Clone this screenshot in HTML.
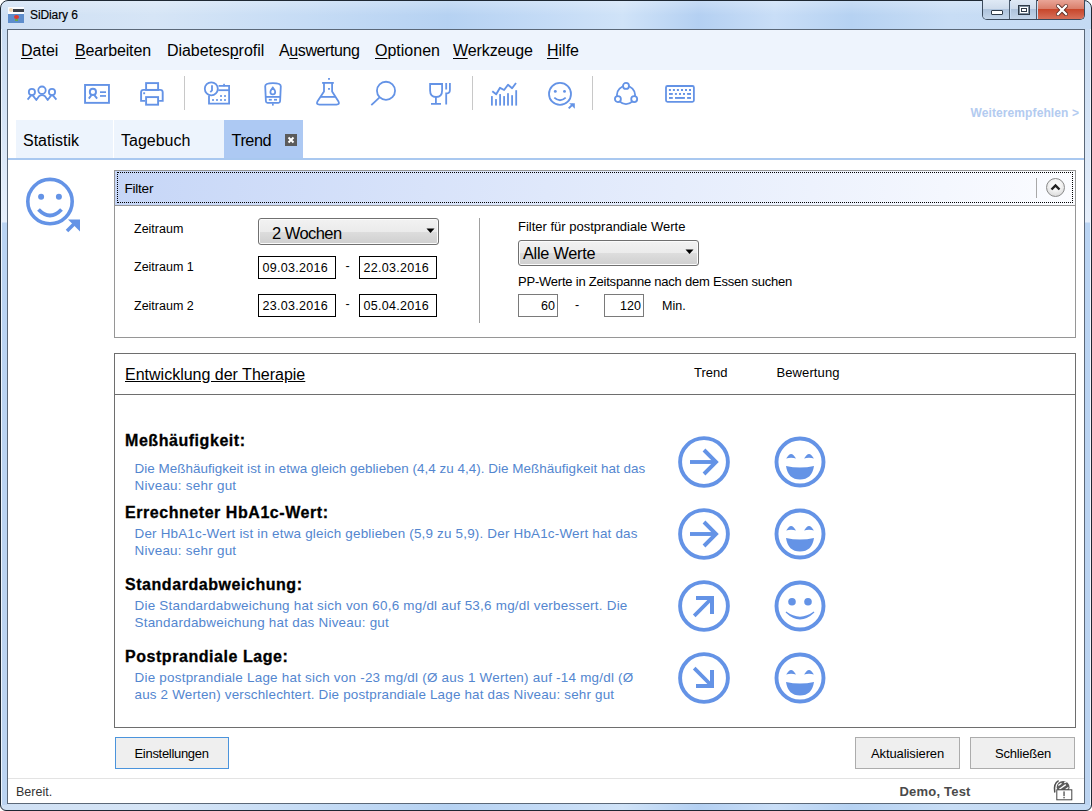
<!DOCTYPE html>
<html><head><meta charset="utf-8">
<style>
*{margin:0;padding:0;box-sizing:border-box}
html,body{width:1092px;height:811px;overflow:hidden;background:#fff;font-family:"Liberation Sans",sans-serif}
.a{position:absolute}
.t{position:absolute;white-space:pre}
u{text-decoration:underline;text-underline-offset:2px}
</style></head><body>
<div class="a" style="left:0;top:0;width:1092px;height:811px;background:linear-gradient(90deg,#cfe0f4 0%,#d6e5f6 14%,#c6dcf5 28%,#b6d2f2 41%,#c4dbf6 50%,#d0e3f8 57%,#b4d0f2 64%,#c9def7 71%,#b6d2f2 78%,#c8ddf5 87%,#c4daf3 100%);border:1px solid #1e2833;border-radius:8px 8px 6px 6px"></div>
<div class="a" style="left:1px;top:29px;width:6px;height:776px;background:linear-gradient(180deg,#c9dcf3 0px,#d5e4f6 90px,#e6effb 193px,#bad4f3 194px,#bcd4f1 776px);border-left:1px solid #eef5fd"></div>
<div class="a" style="left:1085px;top:29px;width:6px;height:776px;background:linear-gradient(180deg,#c9dcf3 0px,#d5e4f6 90px,#e6effb 193px,#bad4f3 194px,#bcd4f1 776px);border-right:1px solid #eef5fd"></div>
<div class="a" style="left:1px;top:1px;width:1090px;height:14px;background:linear-gradient(180deg,rgba(255,255,255,.25),rgba(255,255,255,0));border-radius:7px 7px 0 0"></div>
<div class="a" style="left:7px;top:29px;width:1078px;height:775px;background:#fff;border:1px solid #5b6878"></div>
<div class="a" style="left:8px;top:7px;width:16px;height:7px;background:#fafcff"></div>
<div class="a" style="left:8px;top:14px;width:16px;height:9px;background:#5d8dcc"></div>
<div class="a" style="left:9px;top:8px;width:4px;height:4px;border-radius:50%;background:#f0d8b8"></div>
<div class="a" style="left:13px;top:9px;width:11px;height:3px;background:#3a3f48"></div>
<div class="a" style="left:14px;top:15px;width:5px;height:4px;border-radius:50%;background:#e03a2a"></div>
<div class="a" style="left:15px;top:19px;width:3px;height:2px;background:#6aa84a"></div>
<div class="t" style="left:30px;top:9.44px;font-size:12px;line-height:12px;font-weight:400;color:#000;letter-spacing:-0.1px;-webkit-text-stroke:0.15px #000">SiDiary 6</div>
<div class="a" style="left:982px;top:0;width:103px;height:20px;border:1px solid #3b4a5c;border-top:none;border-radius:0 0 5px 5px;overflow:hidden"><div class="a" style="left:0;top:0;width:27px;height:19px;background:linear-gradient(180deg,#dfe9f5 0%,#cfdcec 45%,#aec3dc 50%,#c4d6ea 100%);border-right:1px solid #4a5a6c"></div><div class="a" style="left:28px;top:0;width:26px;height:19px;background:linear-gradient(180deg,#dfe9f5 0%,#cfdcec 45%,#aec3dc 50%,#c4d6ea 100%);border-right:1px solid #4a5a6c"></div><div class="a" style="left:55px;top:0;width:48px;height:19px;background:linear-gradient(180deg,#e9a597 0%,#da7f6c 45%,#c8472c 50%,#d7705a 100%)"></div></div>
<div class="a" style="left:991px;top:10px;width:12px;height:5px;border:1px solid #2f3b48;background:#fff;border-radius:1px"></div>
<div class="a" style="left:1018px;top:5px;width:12px;height:10px;border:1px solid #2f3b48;background:#fff;box-shadow:inset 0 0 0 1px #8090a0"></div>
<div class="a" style="left:1021px;top:8px;width:6px;height:4px;border:1px solid #2f3b48;background:#fff"></div>
<svg class="a" style="left:1056px;top:4px" width="12" height="12" viewBox="0 0 12 12"><path d="M2 2 L10 10 M10 2 L2 10" stroke="#5a2a22" stroke-width="4" stroke-linecap="square"/><path d="M2 2 L10 10 M10 2 L2 10" stroke="#fff" stroke-width="2.3" stroke-linecap="square"/></svg>
<div class="a" style="left:8px;top:30px;width:1076px;height:40px;background:#eef4fd"></div>
<div class="t" style="left:21px;top:42.86px;font-size:16px;line-height:16px;font-weight:400;color:#000;letter-spacing:0px;"><u>D</u>atei</div>
<div class="t" style="left:75px;top:42.86px;font-size:16px;line-height:16px;font-weight:400;color:#000;letter-spacing:-0.15px;"><u>B</u>earbeiten</div>
<div class="t" style="left:167px;top:42.86px;font-size:16px;line-height:16px;font-weight:400;color:#000;letter-spacing:-0.05px;">Diabetes<u>p</u>rofil</div>
<div class="t" style="left:279px;top:42.86px;font-size:16px;line-height:16px;font-weight:400;color:#000;letter-spacing:-0.4px;">A<u>u</u>swertung</div>
<div class="t" style="left:375px;top:42.86px;font-size:16px;line-height:16px;font-weight:400;color:#000;letter-spacing:0px;"><u>O</u>ptionen</div>
<div class="t" style="left:453px;top:42.86px;font-size:16px;line-height:16px;font-weight:400;color:#000;letter-spacing:-0.1px;"><u>W</u>erkzeuge</div>
<div class="t" style="left:547px;top:42.86px;font-size:16px;line-height:16px;font-weight:400;color:#000;letter-spacing:0px;"><u>H</u>ilfe</div>
<div class="a" style="left:8px;top:70px;width:1076px;height:50px;background:#fff"></div>
<div class="a" style="left:184px;top:76px;width:1px;height:34px;background:#c8c8c8"></div>
<div class="a" style="left:472px;top:76px;width:1px;height:34px;background:#c8c8c8"></div>
<div class="a" style="left:592px;top:76px;width:1px;height:34px;background:#c8c8c8"></div>
<div class="t" style="left:970.5px;top:106.94px;font-size:12px;line-height:12px;font-weight:700;color:#b3cbf0;letter-spacing:0.1px;">Weiterempfehlen &gt;</div>
<svg class="a" style="left:24px;top:80px" width="36" height="24" viewBox="0 0 36 24"><g fill="none" stroke="#6493e6" stroke-width="1.8"><circle cx="7.9" cy="12" r="3.1"/><circle cx="18" cy="10.2" r="3.7"/><circle cx="28" cy="12" r="3.1"/><path d="M3.6 19.6 L6.6 15.9 Q7.9 15 9.2 15.9 L12.3 20 L15 16.2 Q18 14.2 21 16.2 L23.7 20 L26.8 15.9 Q28 15 29.3 15.9 L32.4 19.6" stroke-linejoin="round"/></g></svg>
<svg class="a" style="left:83px;top:83px" width="28" height="22" viewBox="0 0 28 22"><g fill="none" stroke="#6493e6" stroke-width="1.9"><rect x="2.05" y="1.95" width="23.9" height="17.9"/><circle cx="9.9" cy="8.9" r="3.1"/><path d="M5.8 15.6 L8.4 12.1 M11.4 12.1 L14.1 15.6"/></g><g fill="#6493e6"><rect x="17" y="8.3" width="6" height="1.7"/><rect x="17" y="12.1" width="6" height="1.7"/></g></svg>
<svg class="a" style="left:139px;top:81px" width="27" height="26" viewBox="0 0 27 26"><g fill="none" stroke="#6493e6" stroke-width="1.9"><rect x="7.1" y="2.1" width="12" height="6.8"/><path d="M6.1 19.9 H2.1 V11.3 Q2.1 8.9 4.6 8.9 H21.2 Q23.7 8.9 23.7 11.3 V19.9 H20.1"/><rect x="7.1" y="16.1" width="12" height="7.6"/></g><rect x="4.2" y="11.3" width="1.9" height="1.9" fill="#6493e6"/></svg>
<svg class="a" style="left:203px;top:80px" width="29" height="27" viewBox="0 0 29 27"><g fill="none" stroke="#6493e6" stroke-width="1.8"><circle cx="8.3" cy="8.8" r="6.5"/><path d="M9 5.3 V10.4 L7.3 12.1"/><path d="M15.6 5.8 H26.1 V23.6 H6 V15.8"/><path d="M15.2 10.2 H26"/></g><g fill="#6493e6"><rect x="20.2" y="3.8" width="1.7" height="2.5"/><rect x="17.1" y="15.1" width="1.8" height="1.8"/><rect x="21.1" y="15.1" width="1.8" height="1.8"/><rect x="9.1" y="19.1" width="1.8" height="1.8"/><rect x="13.1" y="19.1" width="1.8" height="1.8"/><rect x="17.1" y="19.1" width="1.8" height="1.8"/><rect x="21.1" y="19.1" width="1.8" height="1.8"/></g></svg>
<svg class="a" style="left:263px;top:81px" width="21" height="27" viewBox="0 0 21 27"><g fill="none" stroke="#6493e6" stroke-width="1.8"><path d="M2.2 5.2 Q2.2 2.2 9.9 2.2 Q17.8 2.2 17.8 5.2 L17.1 20.2 Q17 21.8 15.4 21.8 H4.6 Q3 21.8 2.9 20.2 Z"/><path d="M2.8 15.9 H17.3"/><path d="M9.8 6.6 Q7.4 9.5 7.4 10.9 A2.4 2.4 0 0 0 12.2 10.9 Q12.2 9.5 9.8 6.6Z"/></g><g fill="#6493e6"><rect x="5.8" y="17.9" width="3" height="1.7"/><rect x="11" y="17.9" width="3" height="1.7"/><rect x="9" y="22.4" width="1.7" height="2.2"/></g></svg>
<svg class="a" style="left:315px;top:77px" width="27" height="30" viewBox="0 0 27 30"><g fill="none" stroke="#6493e6" stroke-width="1.8"><path d="M7.1 5.9 H18.8"/><path d="M9 6 V14.6 L2.4 24.6 Q0.9 27.6 4.4 27.6 H21.5 Q25 27.6 23.5 24.6 L17.1 14.6 V6" stroke-linejoin="round"/><path d="M5.3 19.9 H20.5"/></g><g fill="#6493e6"><rect x="13.1" y="1" width="1.8" height="1.8"/><rect x="13.1" y="11" width="1.8" height="1.8"/></g></svg>
<svg class="a" style="left:369px;top:80px" width="29" height="28" viewBox="0 0 29 28"><g fill="none" stroke="#6493e6" stroke-width="1.8"><circle cx="17" cy="10.8" r="9.05"/><path d="M2.3 25.2 L10.3 17.6"/></g></svg>
<svg class="a" style="left:427px;top:81px" width="26" height="25" viewBox="0 0 26 25"><g fill="none" stroke="#6493e6" stroke-width="1.8"><path d="M3.1 3 H15.1 V9.5 Q15.1 16 9.1 16 Q3.1 16 3.1 9.5Z"/><path d="M8.9 16 V22.8 M4 22.8 H14"/><path d="M19.2 2 V8.5 M22.9 2 V9 Q22.9 12.5 19.2 12.5 V23.6"/></g></svg>
<svg class="a" style="left:489px;top:81px" width="30" height="26" viewBox="0 0 30 26"><path d="M3.3 10.3 L7.2 13.3 L11 6.8 L15.1 9 L19 3.8 L23.1 7.2 L27 2" fill="none" stroke="#6493e6" stroke-width="1.9" stroke-linejoin="round"/><g fill="#6493e6"><rect x="2.0" y="15.1" width="1.8" height="9.5"/><rect x="6.1" y="18.1" width="1.8" height="6.5"/><rect x="10.2" y="13.1" width="1.8" height="11.5"/><rect x="14.2" y="15.1" width="1.8" height="9.5"/><rect x="18.1" y="12.2" width="1.8" height="12.4"/><rect x="22.2" y="14.2" width="1.8" height="10.4"/><rect x="26.3" y="9.2" width="1.8" height="15.4"/></g></svg>
<svg class="a" style="left:547px;top:81px" width="30" height="30" viewBox="0 0 30 30"><g fill="none" stroke="#6493e6" stroke-width="1.8"><circle cx="13" cy="12.9" r="11"/><path d="M7.3 16.6 Q13 21.8 18.7 16.6"/></g><circle cx="8.3" cy="10.4" r="1.45" fill="#6493e6"/><circle cx="17.5" cy="10.4" r="1.45" fill="#6493e6"/><path d="M21.7 27.4 L26 23.1" stroke="#6493e6" stroke-width="2"/><path d="M22.2 22.2 H27.8 V27.8Z" fill="#6493e6"/></svg>
<svg class="a" style="left:613px;top:81px" width="26" height="25" viewBox="0 0 26 25"><g fill="none" stroke="#6493e6" stroke-width="1.8"><circle cx="13" cy="14" r="9.1"/></g><g fill="#fff" stroke="#6493e6" stroke-width="1.8"><circle cx="13" cy="4.9" r="3"/><circle cx="4.9" cy="18.1" r="3"/><circle cx="21.2" cy="18.1" r="3"/></g></svg>
<svg class="a" style="left:664px;top:84px" width="32" height="20" viewBox="0 0 32 20"><rect x="2" y="2" width="27.9" height="15.8" rx="1.5" fill="none" stroke="#6493e6" stroke-width="1.8"/><g fill="#6493e6"><rect x="4.9" y="5" width="2" height="2"/><rect x="8.9" y="5" width="2" height="2"/><rect x="12.9" y="5" width="2" height="2"/><rect x="17.0" y="5" width="2" height="2"/><rect x="21.0" y="5" width="2" height="2"/><rect x="25.0" y="5" width="2" height="2"/><rect x="5" y="9" width="3.8" height="1.9"/><rect x="10.9" y="9" width="2" height="1.9"/><rect x="15.0" y="9" width="2" height="1.9"/><rect x="19.0" y="9" width="2" height="1.9"/><rect x="23.1" y="9" width="3.9" height="1.9"/><rect x="5" y="13" width="3.8" height="1.9"/><rect x="11" y="13" width="9.9" height="1.9"/><rect x="23.1" y="13" width="3.9" height="1.9"/></g></svg>
<div class="a" style="left:16px;top:120px;width:97px;height:38px;background:#edf4fd"></div>
<div class="a" style="left:114px;top:120px;width:110px;height:38px;background:#edf4fd"></div>
<div class="a" style="left:224px;top:120px;width:79px;height:38px;background:#adc9f3"></div>
<div class="t" style="left:23px;top:132.96px;font-size:16px;line-height:16px;font-weight:400;color:#000;letter-spacing:0px;">Statistik</div>
<div class="t" style="left:121px;top:132.96px;font-size:16px;line-height:16px;font-weight:400;color:#000;letter-spacing:0px;">Tagebuch</div>
<div class="t" style="left:231.5px;top:132.10px;font-size:16.3px;line-height:16.3px;font-weight:400;color:#000;letter-spacing:-0.45px;">Trend</div>
<div class="a" style="left:285px;top:134px;width:12px;height:12px;background:#5b5b5b"></div>
<svg class="a" style="left:285px;top:134px" width="12" height="12" viewBox="0 0 12 12"><path d="M3.5 3.5L8.5 8.5M8.5 3.5L3.5 8.5" stroke="#fff" stroke-width="2"/></svg>
<div class="a" style="left:8px;top:158px;width:1076px;height:2px;background:#a9c8f0"></div>
<svg class="a" style="left:22px;top:174px" width="64" height="62" viewBox="0 0 64 62"><circle cx="28" cy="27.6" r="22.2" fill="none" stroke="#6493e6" stroke-width="3.6"/><circle cx="19.1" cy="22.8" r="3" fill="#6493e6"/><circle cx="36.9" cy="22.8" r="3" fill="#6493e6"/><path d="M16.5 35.5 Q28 47.5 39.5 35.5" fill="none" stroke="#6493e6" stroke-width="3.8"/><path d="M45 57 L54 48" stroke="#6493e6" stroke-width="3.6"/><path d="M46 45.5 H58 V57.5Z" fill="#6493e6"/></svg>
<div class="a" style="left:114px;top:170px;width:962px;height:168px;border:1px solid #969696;background:#fff"></div>
<div class="a" style="left:115px;top:171px;width:960px;height:34px;background:linear-gradient(90deg,#c6d6f7 0%,#dfe8fb 45%,#fbfcff 100%)"></div>
<div class="a" style="left:114px;top:205px;width:962px;height:1px;background:#969696"></div>
<div class="a" style="left:117px;top:172px;width:956px;height:31px;border:1px dotted #000"></div>
<div class="t" style="left:124.5px;top:181.99px;font-size:13.6px;line-height:13.6px;font-weight:400;color:#000;letter-spacing:-0.25px;">Filter</div>
<div class="a" style="left:1036px;top:178px;width:1px;height:20px;background:#a8a8a8"></div>
<div class="a" style="left:1046px;top:178px;width:19px;height:19px;border-radius:50%;border:1px solid #8a8a8a;background:radial-gradient(circle at 50% 35%,#fff 0%,#f4f4f4 40%,#cfcfcf 100%)"></div>
<svg class="a" style="left:1049px;top:182px" width="13" height="10" viewBox="0 0 13 10"><path d="M2.5 7.5 L6.5 3.5 L10.5 7.5" fill="none" stroke="#222" stroke-width="2.4"/></svg>
<div class="t" style="left:134px;top:223.32px;font-size:12.5px;line-height:12.5px;font-weight:400;color:#000;letter-spacing:0px;">Zeitraum</div>
<div class="t" style="left:134px;top:261.32px;font-size:12.5px;line-height:12.5px;font-weight:400;color:#000;letter-spacing:0px;">Zeitraum 1</div>
<div class="t" style="left:134px;top:299.82px;font-size:12.5px;line-height:12.5px;font-weight:400;color:#000;letter-spacing:0px;">Zeitraum 2</div>
<div class="a" style="left:258px;top:218px;width:181px;height:27px;border:1px solid #707070;border-radius:3px;box-shadow:inset 0 0 0 1px #fbfbfb;background:linear-gradient(180deg,#f2f2f2 0%,#ebebeb 50%,#dddddd 51%,#cfcfcf 100%)"></div>
<div class="t" style="left:272px;top:224.53px;font-size:16.5px;line-height:16.5px;font-weight:400;color:#000;letter-spacing:-0.55px;">2 Wochen</div>
<svg class="a" style="left:426px;top:228px" width="10" height="6" viewBox="0 0 10 6"><path d="M0.5 0.5h8l-4 4.5z" fill="#000"/></svg>
<div class="a" style="left:258px;top:256px;width:78px;height:23px;border:1px solid #000;background:#fff"></div>
<div class="t" style="left:262.5px;top:261.82px;font-size:12.5px;line-height:12.5px;font-weight:400;color:#000;letter-spacing:0.3px;">09.03.2016</div>
<div class="a" style="left:359px;top:256px;width:78px;height:23px;border:1px solid #000;background:#fff"></div>
<div class="t" style="left:363.5px;top:261.82px;font-size:12.5px;line-height:12.5px;font-weight:400;color:#000;letter-spacing:0.3px;">22.03.2016</div>
<div class="a" style="left:258px;top:294px;width:78px;height:23px;border:1px solid #000;background:#fff"></div>
<div class="t" style="left:262.5px;top:299.82px;font-size:12.5px;line-height:12.5px;font-weight:400;color:#000;letter-spacing:0.3px;">23.03.2016</div>
<div class="a" style="left:359px;top:294px;width:78px;height:23px;border:1px solid #000;background:#fff"></div>
<div class="t" style="left:363.5px;top:299.82px;font-size:12.5px;line-height:12.5px;font-weight:400;color:#000;letter-spacing:0.3px;">05.04.2016</div>
<div class="t" style="left:345.5px;top:260.32px;font-size:12.5px;line-height:12.5px;font-weight:400;color:#000;letter-spacing:0px;">-</div>
<div class="t" style="left:345.5px;top:298.32px;font-size:12.5px;line-height:12.5px;font-weight:400;color:#000;letter-spacing:0px;">-</div>
<div class="a" style="left:479px;top:218px;width:1px;height:105px;background:#a0a0a0"></div>
<div class="t" style="left:518px;top:220.40px;font-size:13px;line-height:13px;font-weight:400;color:#000;letter-spacing:0px;">Filter für postprandiale Werte</div>
<div class="a" style="left:518px;top:240px;width:181px;height:26px;border:1px solid #707070;border-radius:3px;box-shadow:inset 0 0 0 1px #fbfbfb;background:linear-gradient(180deg,#f2f2f2 0%,#ebebeb 50%,#dddddd 51%,#cfcfcf 100%)"></div>
<div class="t" style="left:523px;top:245.40px;font-size:16.3px;line-height:16.3px;font-weight:400;color:#000;letter-spacing:-0.25px;">Alle Werte</div>
<svg class="a" style="left:685px;top:249px" width="10" height="6" viewBox="0 0 10 6"><path d="M0.5 0.5h8l-4 4.5z" fill="#000"/></svg>
<div class="t" style="left:518px;top:275.40px;font-size:13px;line-height:13px;font-weight:400;color:#000;letter-spacing:-0.22px;">PP-Werte in Zeitspanne nach dem Essen suchen</div>
<div class="a" style="left:518px;top:294px;width:40px;height:23px;border:1px solid #7a7a7a;background:#fff"></div>
<div class="a" style="left:604px;top:294px;width:40px;height:23px;border:1px solid #7a7a7a;background:#fff"></div>
<div class="t" style="left:541px;top:299.82px;font-size:12.5px;line-height:12.5px;font-weight:400;color:#000;letter-spacing:0px;">60</div>
<div class="t" style="left:620px;top:299.82px;font-size:12.5px;line-height:12.5px;font-weight:400;color:#000;letter-spacing:0px;">120</div>
<div class="t" style="left:575px;top:299.32px;font-size:12.5px;line-height:12.5px;font-weight:400;color:#000;letter-spacing:0px;">-</div>
<div class="t" style="left:662px;top:299.82px;font-size:12.5px;line-height:12.5px;font-weight:400;color:#000;letter-spacing:0px;">Min.</div>
<div class="a" style="left:114px;top:353px;width:962px;height:375px;border:1px solid #6e6e6e;background:#fff"></div>
<div class="a" style="left:114px;top:394px;width:962px;height:1px;background:#6e6e6e"></div>
<div class="t" style="left:125px;top:366.76px;font-size:16px;line-height:16px;font-weight:400;color:#000;letter-spacing:0px;text-decoration:underline;text-underline-offset:1px">Entwicklung der Therapie</div>
<div class="t" style="left:694px;top:366.40px;font-size:13px;line-height:13px;font-weight:400;color:#000;letter-spacing:0px;">Trend</div>
<div class="t" style="left:776.5px;top:366.40px;font-size:13px;line-height:13px;font-weight:400;color:#000;letter-spacing:0.1px;">Bewertung</div>
<div class="t" style="left:125px;top:433.06px;font-size:16px;line-height:16px;font-weight:700;color:#000;letter-spacing:0.55px;-webkit-text-stroke:0.3px #000">Meßhäufigkeit:</div>
<div class="t" style="left:125px;top:505.26px;font-size:16px;line-height:16px;font-weight:700;color:#000;letter-spacing:0.55px;-webkit-text-stroke:0.3px #000">Errechneter HbA1c-Wert:</div>
<div class="t" style="left:125px;top:577.26px;font-size:16px;line-height:16px;font-weight:700;color:#000;letter-spacing:0.55px;-webkit-text-stroke:0.3px #000">Standardabweichung:</div>
<div class="t" style="left:125px;top:648.86px;font-size:16px;line-height:16px;font-weight:700;color:#000;letter-spacing:0.55px;-webkit-text-stroke:0.3px #000">Postprandiale Lage:</div>
<div class="t" style="left:134.5px;top:462.01px;font-size:13.45px;line-height:13.45px;font-weight:400;color:#5386cf;letter-spacing:0.033px;">Die Meßhäufigkeit ist in etwa gleich geblieben (4,4 zu 4,4). Die Meßhäufigkeit hat das</div>
<div class="t" style="left:134.5px;top:478.71px;font-size:13.45px;line-height:13.45px;font-weight:400;color:#5386cf;letter-spacing:0.25px;">Niveau: sehr gut</div>
<div class="t" style="left:134.5px;top:527.01px;font-size:13.45px;line-height:13.45px;font-weight:400;color:#5386cf;letter-spacing:0.19px;">Der HbA1c-Wert ist in etwa gleich geblieben (5,9 zu 5,9). Der HbA1c-Wert hat das</div>
<div class="t" style="left:134.5px;top:543.61px;font-size:13.45px;line-height:13.45px;font-weight:400;color:#5386cf;letter-spacing:0.25px;">Niveau: sehr gut</div>
<div class="t" style="left:134.5px;top:598.91px;font-size:13.45px;line-height:13.45px;font-weight:400;color:#5386cf;letter-spacing:0.234px;">Die Standardabweichung hat sich von 60,6 mg/dl auf 53,6 mg/dl verbessert. Die</div>
<div class="t" style="left:134.5px;top:616.11px;font-size:13.45px;line-height:13.45px;font-weight:400;color:#5386cf;letter-spacing:0.23px;">Standardabweichung hat das Niveau: gut</div>
<div class="t" style="left:134.5px;top:670.81px;font-size:13.45px;line-height:13.45px;font-weight:400;color:#5386cf;letter-spacing:0.231px;">Die postprandiale Lage hat sich von -23 mg/dl (&Oslash; aus 1 Werten) auf -14 mg/dl (&Oslash;</div>
<div class="t" style="left:134.5px;top:688.11px;font-size:13.45px;line-height:13.45px;font-weight:400;color:#5386cf;letter-spacing:0.17px;">aus 2 Werten) verschlechtert. Die postprandiale Lage hat das Niveau: sehr gut</div>
<svg class="a" style="left:678px;top:436px" width="52" height="52" viewBox="0 0 52 52"><circle cx="26" cy="26" r="23.9" fill="none" stroke="#6493e6" stroke-width="3.9"/><path d="M12 26 H38" stroke="#6493e6" stroke-width="3.9"/><path d="M26 14 L38 26 L26 38" fill="none" stroke="#6493e6" stroke-width="3.9"/></svg>
<svg class="a" style="left:774px;top:436px" width="52" height="52" viewBox="0 0 52 52"><circle cx="26" cy="26" r="23.5" fill="none" stroke="#6493e6" stroke-width="3.9"/><path d="M12.2 22.6 Q17.1 13.2 22 22.6 Q17.1 20.8 12.2 22.6Z" fill="#6493e6"/><path d="M30.1 22.6 Q35 13.2 39.9 22.6 Q35 20.8 30.1 22.6Z" fill="#6493e6"/><path d="M12 30 Q26 33 40 30 Q38 43.5 26 43.5 Q14 43.5 12 30Z" fill="#6493e6"/></svg>
<svg class="a" style="left:678px;top:508px" width="52" height="52" viewBox="0 0 52 52"><circle cx="26" cy="26" r="23.9" fill="none" stroke="#6493e6" stroke-width="3.9"/><path d="M12 26 H38" stroke="#6493e6" stroke-width="3.9"/><path d="M26 14 L38 26 L26 38" fill="none" stroke="#6493e6" stroke-width="3.9"/></svg>
<svg class="a" style="left:774px;top:508px" width="52" height="52" viewBox="0 0 52 52"><circle cx="26" cy="26" r="23.5" fill="none" stroke="#6493e6" stroke-width="3.9"/><path d="M12.2 22.6 Q17.1 13.2 22 22.6 Q17.1 20.8 12.2 22.6Z" fill="#6493e6"/><path d="M30.1 22.6 Q35 13.2 39.9 22.6 Q35 20.8 30.1 22.6Z" fill="#6493e6"/><path d="M12 30 Q26 33 40 30 Q38 43.5 26 43.5 Q14 43.5 12 30Z" fill="#6493e6"/></svg>
<svg class="a" style="left:678px;top:580px" width="52" height="52" viewBox="0 0 52 52"><circle cx="26" cy="26" r="23.9" fill="none" stroke="#6493e6" stroke-width="3.9"/><path d="M16.2 35.8 L34 18" stroke="#6493e6" stroke-width="3.8"/><path d="M18 16 H36 V34 L32 34 V20 H18Z" fill="#6493e6"/></svg>
<svg class="a" style="left:774px;top:580px" width="52" height="52" viewBox="0 0 52 52"><circle cx="26" cy="26" r="23.5" fill="none" stroke="#6493e6" stroke-width="3.9"/><circle cx="18" cy="21.8" r="3.8" fill="#6493e6"/><circle cx="34" cy="21.8" r="3.8" fill="#6493e6"/><path d="M11.6 32.6 Q26 46.4 40.4 32.6 L39.8 31.6 Q26 41.8 12.2 31.6 Z" fill="#6493e6"/></svg>
<svg class="a" style="left:678px;top:652px" width="52" height="52" viewBox="0 0 52 52"><circle cx="26" cy="26" r="23.9" fill="none" stroke="#6493e6" stroke-width="3.9"/><path d="M16.2 16.2 L34 34" stroke="#6493e6" stroke-width="3.8"/><path d="M18 36 H36 V18 L32 18 V32 H18Z" fill="#6493e6"/></svg>
<svg class="a" style="left:774px;top:652px" width="52" height="52" viewBox="0 0 52 52"><circle cx="26" cy="26" r="23.5" fill="none" stroke="#6493e6" stroke-width="3.9"/><path d="M12.2 22.6 Q17.1 13.2 22 22.6 Q17.1 20.8 12.2 22.6Z" fill="#6493e6"/><path d="M30.1 22.6 Q35 13.2 39.9 22.6 Q35 20.8 30.1 22.6Z" fill="#6493e6"/><path d="M12 30 Q26 33 40 30 Q38 43.5 26 43.5 Q14 43.5 12 30Z" fill="#6493e6"/></svg>
<div class="a" style="left:115px;top:737px;width:114px;height:32px;background:#efefef;border:1px solid #4b94dc"></div>
<div class="t" style="left:134.5px;top:747.20px;font-size:13px;line-height:13px;font-weight:400;color:#000;letter-spacing:-0.3px;">Einstellungen</div>
<div class="a" style="left:855px;top:737px;width:105px;height:32px;background:#efefef;border:1px solid #acacac"></div>
<div class="t" style="left:871px;top:747.20px;font-size:13px;line-height:13px;font-weight:400;color:#000;letter-spacing:-0.1px;">Aktualisieren</div>
<div class="a" style="left:970px;top:737px;width:105px;height:32px;background:#efefef;border:1px solid #acacac"></div>
<div class="t" style="left:995px;top:747.20px;font-size:13px;line-height:13px;font-weight:400;color:#000;letter-spacing:-0.2px;">Schließen</div>
<div class="a" style="left:8px;top:778px;width:1076px;height:1px;background:#e3e3e3"></div>
<div class="t" style="left:16px;top:786.32px;font-size:12.5px;line-height:12.5px;font-weight:400;color:#333;letter-spacing:0px;">Bereit.</div>
<div class="t" style="left:899.5px;top:784.70px;font-size:13px;line-height:13px;font-weight:700;color:#4a4a4a;letter-spacing:0.2px;">Demo, Test</div>
<svg class="a" style="left:1050px;top:778px" width="24" height="24" viewBox="0 0 24 24"><path d="M8.6 2.6 Q3.2 5.5 4.8 14.5" fill="none" stroke="#505050" stroke-width="1.5"/><circle cx="13.1" cy="9.3" r="6.4" fill="#5c5c5c"/><g stroke="#fff" stroke-width="1.3" fill="none"><path d="M8.3 7.5 L11.5 5.2"/><path d="M9.3 11.2 L15.8 6.6"/><path d="M14.2 4.6 L16.5 3.9"/><path d="M15.6 11.5 L18.4 9.5"/></g><rect x="6.8" y="11.8" width="15" height="10" fill="#fff" stroke="#444" stroke-width="1"/><rect x="13.3" y="13.4" width="1.5" height="4.8" fill="#666"/><rect x="13.3" y="19.1" width="1.5" height="1.2" fill="#555"/></svg>
</body></html>
